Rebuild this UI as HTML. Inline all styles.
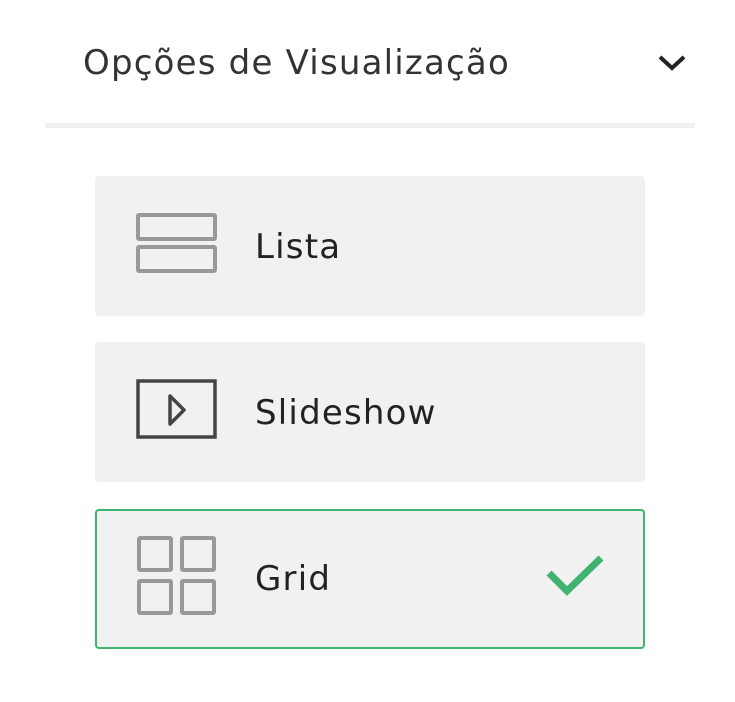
<!DOCTYPE html>
<html><head><style>
body{margin:0;background:#fff;width:735px;height:702px;position:relative;font-family:"DejaVu Sans","Liberation Sans",sans-serif;color:#222;overflow:hidden}
.t{position:absolute;font-size:34px;letter-spacing:1.2px}
.card{position:absolute;left:95px;width:550px;height:140px;background:#f1f1f1;border-radius:4px;box-sizing:border-box}
svg{position:absolute;left:0;top:0}
</style></head><body>
<div class="t" style="left:83px;top:43px;color:#333">Opções de Visualização</div>
<div style="position:absolute;left:45px;top:123px;width:650px;height:5px;background:#f1f1f1"></div>
<div class="card" style="top:176px"></div>
<div class="card" style="top:342px"></div>
<div class="card" style="top:509px;height:140px;border:2px solid #3fb36f"></div>
<div class="t" style="left:255px;top:227px">Lista</div>
<div class="t" style="left:255px;top:393px">Slideshow</div>
<div class="t" style="left:255px;top:559px">Grid</div>
<svg width="735" height="702">
<polyline points="660,57 672,68 684,57" fill="none" stroke="#222" stroke-width="4"/>
<g fill="none" stroke="#999" stroke-width="4">
<rect x="138" y="215" width="77" height="24" rx="1"/>
<rect x="138" y="247" width="77" height="24" rx="1"/>
<rect x="139" y="538" width="32" height="32" rx="1"/>
<rect x="182" y="538" width="32" height="32" rx="1"/>
<rect x="139" y="581" width="32" height="32" rx="1"/>
<rect x="182" y="581" width="32" height="32" rx="1"/>
</g>
<rect x="138" y="381" width="77" height="56" fill="none" stroke="#444" stroke-width="3.5"/>
<polygon points="170,396 184,410 170,424" fill="none" stroke="#444" stroke-width="3.5" stroke-linejoin="round"/>
<polyline points="549,573 567,591 601,558" fill="none" stroke="#3fb36f" stroke-width="7"/>
</svg>
</body></html>
